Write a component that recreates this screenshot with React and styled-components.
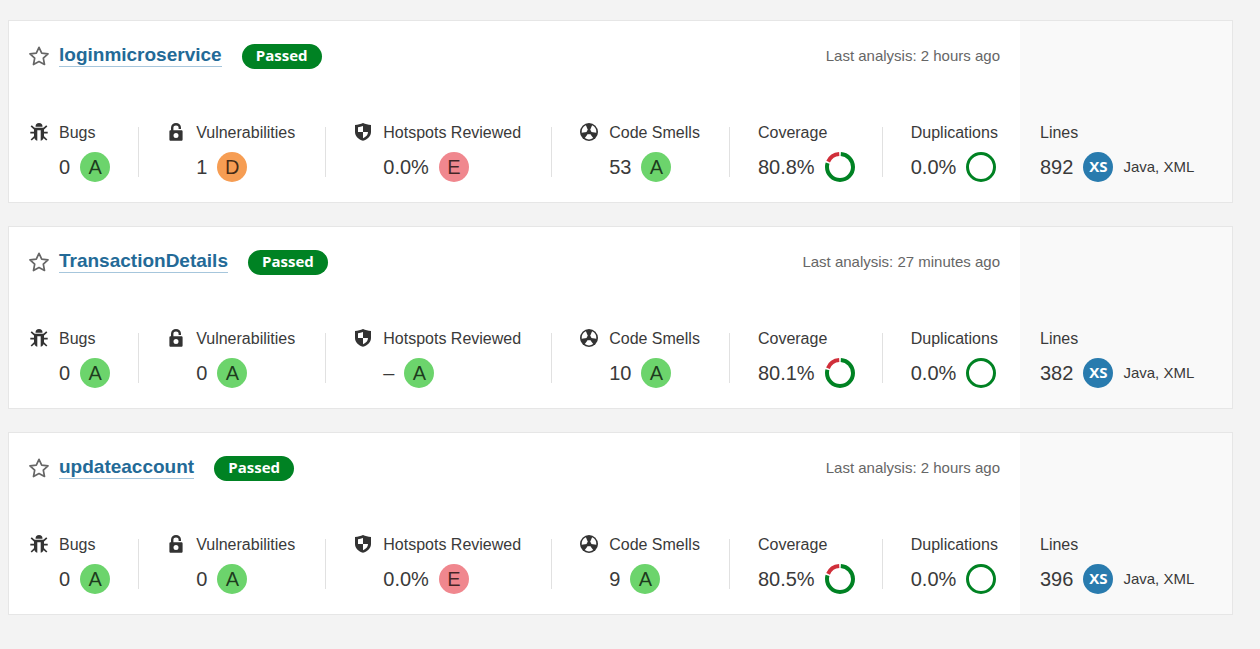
import React from 'react';
import styled, { createGlobalStyle } from 'styled-components';

const GlobalStyle = createGlobalStyle`
  *, *::before, *::after { box-sizing: border-box; }
  body {
    margin: 0;
    background: #f3f3f3;
    color: #3a3a3a;
    font-family: "Liberation Sans", Arial, sans-serif;
    font-size: 16px;
    line-height: 20px;
  }
`;

const ProjectList = styled.main`
  display: flex;
  flex-direction: column;
  gap: 23px;
  min-height: 100vh;
  padding: 20px 27px 32px 8px;
`;

const Card = styled.article`
  display: grid;
  grid-template-columns: minmax(0, 1fr) 212px;
  border: 1px solid #e6e6e6;
  background: #fff;
`;

const CardMain = styled.div`
  display: flex;
  flex-direction: column;
  gap: 53px;
  padding: 23px 20px 20px;
`;

const CardSide = styled.aside`
  display: flex;
  align-items: flex-end;
  padding: 20px;
  background: #f9f9f9;
`;

const Header = styled.header`
  display: flex;
  align-items: flex-start;
  height: 25px;
`;

const FavoriteButton = styled.button`
  display: flex;
  flex: none;
  margin: 0 10px 0 0;
  padding: 2px 0 0;
  border: 0;
  background: none;
  color: #666;
  cursor: pointer;
`;

const ProjectName = styled.h2`
  margin: 0 20px 0 0;
  font-size: 19px;
  line-height: 22px;
`;

const ProjectLink = styled.a`
  display: block;
  border-bottom: 1px solid #a6c6dc;
  color: #236a97;
  text-decoration: none;
`;

const QualityGate = styled.span`
  width: 80px;
  height: 25px;
  border-radius: 13px;
  background: #008223;
  color: #fff;
  font-family: "Open Sans", sans-serif;
  font-size: 15px;
  font-weight: 700;
  line-height: 23px;
  text-align: center;
`;

const AnalysisDate = styled.span`
  margin-left: auto;
  color: #666;
  font-size: 15px;
  line-height: 23px;
`;

const Measures = styled.div`
  display: flex;
  align-items: center;
  justify-content: space-between;
`;

const Divider = styled.span`
  flex: none;
  width: 1px;
  height: 50px;
  background: #e1e1e1;
`;

const Measure = styled.section`
  display: grid;
  grid-template-columns: ${(p) => (p.$icon ? '20px auto' : 'auto')};
  gap: 8px 10px;
  align-items: start;
`;

const MeasureLabel = styled.h3`
  grid-column: -2;
  margin: 0;
  padding-right: 2px;
  font-size: 16px;
  font-weight: 400;
  line-height: 22px;
  white-space: nowrap;
`;

const MeasureValue = styled.div`
  display: flex;
  grid-column: -2;
  align-items: center;
  gap: 10px;
  height: 30px;
  font-size: 20px;
  white-space: nowrap;
`;

const Circle = styled.span`
  flex: none;
  width: 30px;
  height: 30px;
  border-radius: 50%;
  line-height: 30px;
  text-align: center;
`;

const ratingColors = { A: '#6cd46c', D: '#f69d53', E: '#f0878e' };

const Rating = styled(Circle)`
  background: ${(p) => ratingColors[p.$grade]};
  color: rgba(0, 0, 0, 0.72);
`;

const SizeRating = styled(Circle)`
  background: #297bae;
  color: #fff;
  font-family: "Open Sans", sans-serif;
  font-size: 15px;
  font-weight: 700;
  line-height: 29px;
`;

const Languages = styled.span`
  font-size: 15px;
`;

const Icon = styled.svg`
  display: block;
  flex: none;
  width: 20px;
  height: 20px;
`;

const Donut = styled.svg`
  display: block;
  flex: none;
  width: 30px;
  height: 30px;
`;

function StarIcon() {
  return (
    <Icon viewBox="0 0 20 20" aria-hidden="true">
      <path
        d="M10 1.3l2.7 5.8 6.3.8-4.7 4.3 1.2 6.3L10 15.6l-5.5 2.9 1.2-6.3L1 7.9l6.3-.8z"
        fill="none"
        stroke="currentColor"
        strokeWidth="1.7"
        strokeLinejoin="round"
      />
    </Icon>
  );
}

function BugIcon() {
  return (
    <Icon viewBox="0 0 20 20" aria-hidden="true">
      <path d="M6.500 4.800a3.500 3.700 0 0 1 7 0z" fill="#333" />
      <path
        d="M5 5.800h10v8.700c0 2.200-1.500 3.800-3.300 4.200V8.200H8.300v10.500C6.500 18.300 5 16.700 5 14.500z"
        fill="#333"
      />
      <path
        d="M2.200 3.900l3.600 3.300M17.800 3.900l-3.600 3.300M1.300 10.700H6M18.700 10.700H14M2.200 18l3.800-3.600M17.800 18l-3.800-3.600"
        fill="none"
        stroke="#333"
        strokeWidth="1.700"
      />
    </Icon>
  );
}

function LockIcon() {
  return (
    <Icon viewBox="0 0 20 20" aria-hidden="true">
      <path d="M6.200 9V5.700a3.800 3.500 0 0 1 7.600 0v1.200" fill="none" stroke="#333" strokeWidth="2.400" />
      <path
        fillRule="evenodd"
        d="M4.700 8.200h10.600c.8 0 1.300.5 1.300 1.300v7.900c0 .8-.5 1.300-1.300 1.300H4.700c-.8 0-1.300-.5-1.300-1.300V9.500c0-.8.5-1.300 1.300-1.300zM10 11a2.500 2.500 0 1 0 0 5 2.500 2.500 0 0 0 0-5z"
        fill="#333"
      />
    </Icon>
  );
}

function ShieldIcon() {
  return (
    <Icon viewBox="0 0 20 20" aria-hidden="true">
      <path
        fillRule="evenodd"
        d="M10 1c2.500 1.200 5 1.700 8 1.900v7c0 4.200-3.500 7.300-8 8.900-4.500-1.600-8-4.700-8-8.900v-7C5 2.700 7.500 2.200 10 1zM10 4C8.300 4.600 6.700 5 5 5.200V10h5zM10 10v6.200c3-1.300 5-3.400 5-6.200z"
        fill="#333"
      />
    </Icon>
  );
}

const BLADE = 'M11.200 12l3 4a7.300 7.300 0 0 1-8.400 0l3-4a2.300 2.300 0 0 0 2.400 0z';

function SmellIcon() {
  return (
    <Icon viewBox="0 0 20 20" aria-hidden="true">
      <circle cx="10" cy="10" r="9" fill="#333" />
      <g fill="#fff">
        <path d={BLADE} />
        <path d={BLADE} transform="rotate(120 10 10)" />
        <path d={BLADE} transform="rotate(240 10 10)" />
      </g>
    </Icon>
  );
}

function CoverageDonut({ value }) {
  return (
    <Donut viewBox="0 0 30 30" aria-hidden="true">
      <g fill="none" strokeWidth="4" transform="rotate(-90 15 15)">
        <circle
          cx="15" cy="15" r="13" pathLength="100" stroke="#008223"
          strokeDasharray={`${value - 2} 100`} strokeDashoffset="-1"
        />
        <circle
          cx="15" cy="15" r="13" pathLength="100" stroke="#d02f3a"
          strokeDasharray={`${98 - value} 100`} strokeDashoffset={-(value + 1)}
        />
      </g>
    </Donut>
  );
}

function DuplicationRing() {
  return (
    <Donut viewBox="0 0 30 30" aria-hidden="true">
      <circle cx="15" cy="15" r="13.500" fill="none" stroke="#008223" strokeWidth="3" />
    </Donut>
  );
}

function MeasureItem({ icon, label, value, children }) {
  return (
    <Measure $icon={Boolean(icon)}>
      {icon}
      <MeasureLabel>{label}</MeasureLabel>
      <MeasureValue>
        <span>{value}</span>
        {children}
      </MeasureValue>
    </Measure>
  );
}

const projects = [
  {
    name: 'loginmicroservice', analysis: '2 hours ago', bugs: ['0', 'A'], vulnerabilities: ['1', 'D'],
    hotspots: ['0.0%', 'E'], smells: ['53', 'A'], coverage: 80.8, lines: '892',
  },
  {
    name: 'TransactionDetails', analysis: '27 minutes ago', bugs: ['0', 'A'], vulnerabilities: ['0', 'A'],
    hotspots: ['–', 'A'], smells: ['10', 'A'], coverage: 80.1, lines: '382',
  },
  {
    name: 'updateaccount', analysis: '2 hours ago', bugs: ['0', 'A'], vulnerabilities: ['0', 'A'],
    hotspots: ['0.0%', 'E'], smells: ['9', 'A'], coverage: 80.5, lines: '396',
  },
];

function ProjectCard({ project }) {
  const rated = [
    ['Bugs', BugIcon, project.bugs],
    ['Vulnerabilities', LockIcon, project.vulnerabilities],
    ['Hotspots Reviewed', ShieldIcon, project.hotspots],
    ['Code Smells', SmellIcon, project.smells],
  ];
  return (
    <Card>
      <CardMain>
        <Header>
          <FavoriteButton type="button" aria-label={`Favorite ${project.name}`}>
            <StarIcon />
          </FavoriteButton>
          <ProjectName>
            <ProjectLink href="#">{project.name}</ProjectLink>
          </ProjectName>
          <QualityGate>Passed</QualityGate>
          <AnalysisDate>Last analysis: {project.analysis}</AnalysisDate>
        </Header>
        <Measures>
          {rated.map(([label, Glyph, [value, grade]]) => (
            <React.Fragment key={label}>
              <MeasureItem icon={<Glyph />} label={label} value={value}>
                <Rating $grade={grade}>{grade}</Rating>
              </MeasureItem>
              <Divider />
            </React.Fragment>
          ))}
          <MeasureItem label="Coverage" value={`${project.coverage}%`}>
            <CoverageDonut value={project.coverage} />
          </MeasureItem>
          <Divider />
          <MeasureItem label="Duplications" value="0.0%">
            <DuplicationRing />
          </MeasureItem>
        </Measures>
      </CardMain>
      <CardSide>
        <MeasureItem label="Lines" value={project.lines}>
          <SizeRating>XS</SizeRating>
          <Languages>Java, XML</Languages>
        </MeasureItem>
      </CardSide>
    </Card>
  );
}

export default function App() {
  return (
    <>
      <GlobalStyle />
      <ProjectList>
        {projects.map((project) => (
          <ProjectCard key={project.name} project={project} />
        ))}
      </ProjectList>
    </>
  );
}
